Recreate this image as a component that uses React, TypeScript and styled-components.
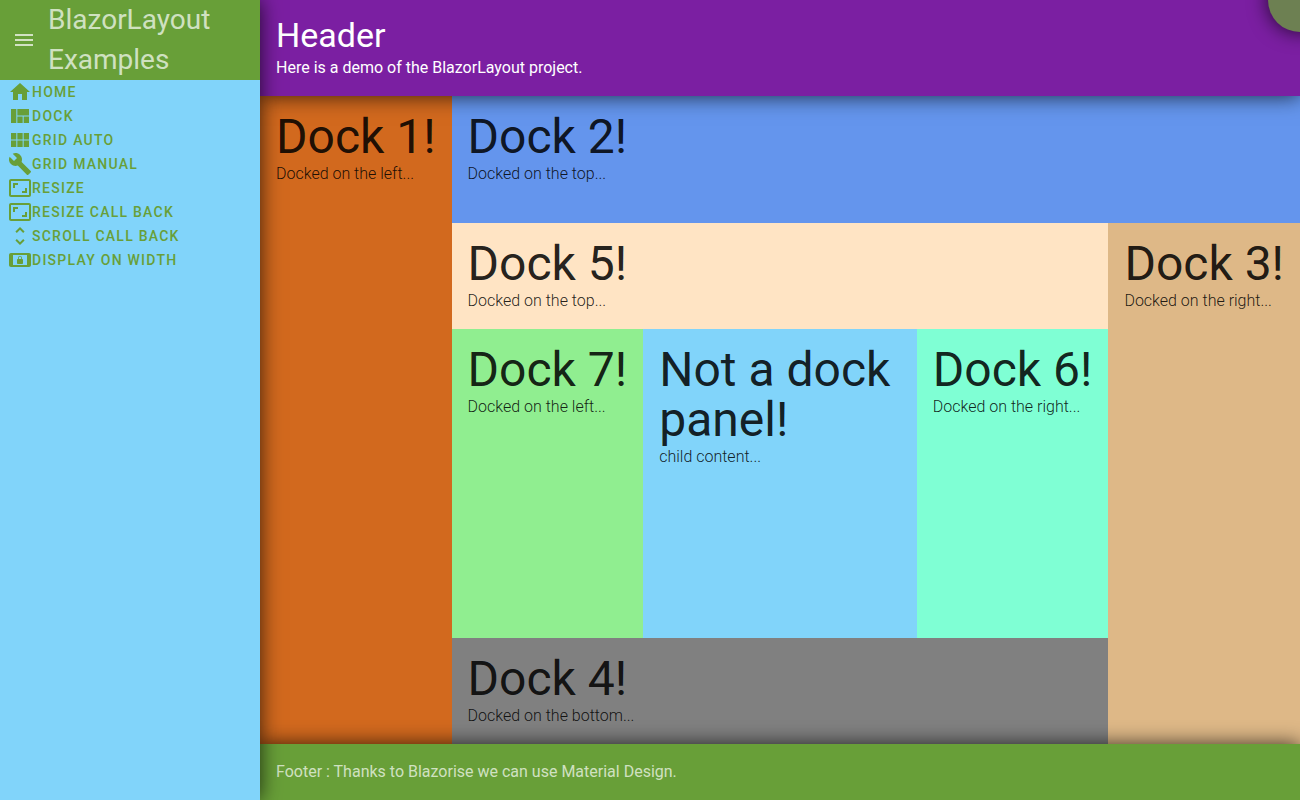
import React from "react";
import styled, { createGlobalStyle } from "styled-components";
import type { IconType } from "react-icons";
import {
  MdAspectRatio,
  MdBuild,
  MdHome,
  MdMenu,
  MdScreenLockLandscape,
  MdUnfoldMore,
  MdViewModule,
  MdViewQuilt,
} from "react-icons/md";

const shadow = "0 0 20px rgba(0, 0, 0, 0.75)";

const GlobalStyle = createGlobalStyle`
  *, *::before, *::after { box-sizing: border-box; }
  body {
    margin: 0;
    font-family: Roboto, "Liberation Sans", sans-serif;
    font-size: 16px;
    line-height: 24px;
    color: rgba(0, 0, 0, 0.87);
  }
`;

const Page = styled.div`
  position: relative;
  display: flex;
  height: 100vh;
  overflow: hidden;
`;

const Sidebar = styled.aside`
  position: relative;
  z-index: 2;
  flex: 0 0 20%;
  background: #81d4fa;
  box-shadow: ${shadow};
`;

const Brand = styled.div`
  display: flex;
  align-items: center;
  background: #689f38;
  color: rgba(255, 255, 255, 0.7);
`;

const MenuButton = styled.button`
  display: flex;
  flex: none;
  padding: 12px;
  border: 0;
  background: none;
  color: inherit;
  font-size: 24px;
`;

const BrandName = styled.span`
  font-size: 28px;
  line-height: 40px;
`;

const NavList = styled.ul`
  margin: 0;
  padding: 0 8px;
  list-style: none;
`;

const NavLink = styled.a`
  display: flex;
  align-items: center;
  height: 24px;
  color: #689f38;
  font-size: 14px;
  font-weight: 500;
  letter-spacing: 1.25px;
  text-transform: uppercase;
  text-decoration: none;

  svg {
    flex: none;
    font-size: 24px;
  }
`;

const Main = styled.main`
  display: flex;
  flex: 1;
  flex-direction: column;
  min-width: 0;
`;

const Header = styled.header`
  position: relative;
  z-index: 1;
  padding: 16px;
  background: #7b1fa2;
  color: #fff;
  box-shadow: ${shadow};
`;

const HeaderTitle = styled.h1`
  margin: 0 0 2px;
  font-size: 34px;
  font-weight: 400;
  line-height: 38px;
`;

const Text = styled.p`
  margin: 0;
`;

const Footer = styled.footer`
  position: relative;
  z-index: 1;
  padding: 16px;
  background: #689f38;
  color: rgba(255, 255, 255, 0.7);
  box-shadow: ${shadow};
`;

const Row = styled.div`
  display: flex;
  flex: 1;
  min-height: 0;
`;

const Column = styled.div`
  display: flex;
  flex: 1;
  flex-direction: column;
  min-width: 0;
`;

const Panel = styled.section<{ $color: string; $fill?: boolean; $tall?: boolean }>`
  flex: ${(p) => (p.$fill ? "1" : "none")};
  min-width: 0;
  min-height: ${(p) => (p.$tall ? "127px" : "0")};
  padding: 16px;
  background: ${(p) => p.$color};
`;

const PanelTitle = styled.h2`
  margin: 0;
  font-size: 48px;
  font-weight: 400;
  line-height: 50px;
`;

const PanelText = styled.p`
  margin: 0;
  font-weight: 300;
`;

const CornerButton = styled.button`
  position: absolute;
  z-index: 3;
  top: -32px;
  right: -32px;
  width: 64px;
  height: 64px;
  border: 0;
  border-radius: 50%;
  background: #6d8052;
  box-shadow: ${shadow};
`;

const links: { label: string; icon: IconType }[] = [
  { label: "Home", icon: MdHome },
  { label: "Dock", icon: MdViewQuilt },
  { label: "Grid auto", icon: MdViewModule },
  { label: "Grid manual", icon: MdBuild },
  { label: "Resize", icon: MdAspectRatio },
  { label: "Resize call back", icon: MdAspectRatio },
  { label: "Scroll call back", icon: MdUnfoldMore },
  { label: "Display on width", icon: MdScreenLockLandscape },
];

interface DockProps {
  title: string;
  text: string;
  color: string;
  fill?: boolean;
  tall?: boolean;
}

function Dock({ title, text, color, fill, tall }: DockProps) {
  return (
    <Panel $color={color} $fill={fill} $tall={tall}>
      <PanelTitle>{title}</PanelTitle>
      <PanelText>{text}</PanelText>
    </Panel>
  );
}

export default function App() {
  return (
    <>
      <GlobalStyle />
      <Page>
        <Sidebar>
          <Brand>
            <MenuButton type="button" aria-label="Toggle menu">
              <MdMenu />
            </MenuButton>
            <BrandName>BlazorLayout Examples</BrandName>
          </Brand>
          <nav>
            <NavList>
              {links.map(({ label, icon: Icon }) => (
                <li key={label}>
                  <NavLink href="#">
                    <Icon />
                    {label}
                  </NavLink>
                </li>
              ))}
            </NavList>
          </nav>
        </Sidebar>
        <Main>
          <Header>
            <HeaderTitle>Header</HeaderTitle>
            <Text>Here is a demo of the BlazorLayout project.</Text>
          </Header>
          <Row>
            <Dock title="Dock 1!" text="Docked on the left..." color="#d2691e" />
            <Column>
              <Dock title="Dock 2!" text="Docked on the top..." color="#6495ed" tall />
              <Row>
                <Column>
                  <Dock title="Dock 5!" text="Docked on the top..." color="#ffe4c4" />
                  <Row>
                    <Dock title="Dock 7!" text="Docked on the left..." color="#90ee90" />
                    <Dock title="Not a dock panel!" text="child content..." color="#81d4fa" fill />
                    <Dock title="Dock 6!" text="Docked on the right..." color="#7fffd4" />
                  </Row>
                  <Dock title="Dock 4!" text="Docked on the bottom..." color="#808080" />
                </Column>
                <Dock title="Dock 3!" text="Docked on the right..." color="#deb887" />
              </Row>
            </Column>
          </Row>
          <Footer>
            <Text>Footer : Thanks to Blazorise we can use Material Design.</Text>
          </Footer>
        </Main>
        <CornerButton type="button" aria-label="Open panel" />
      </Page>
    </>
  );
}
